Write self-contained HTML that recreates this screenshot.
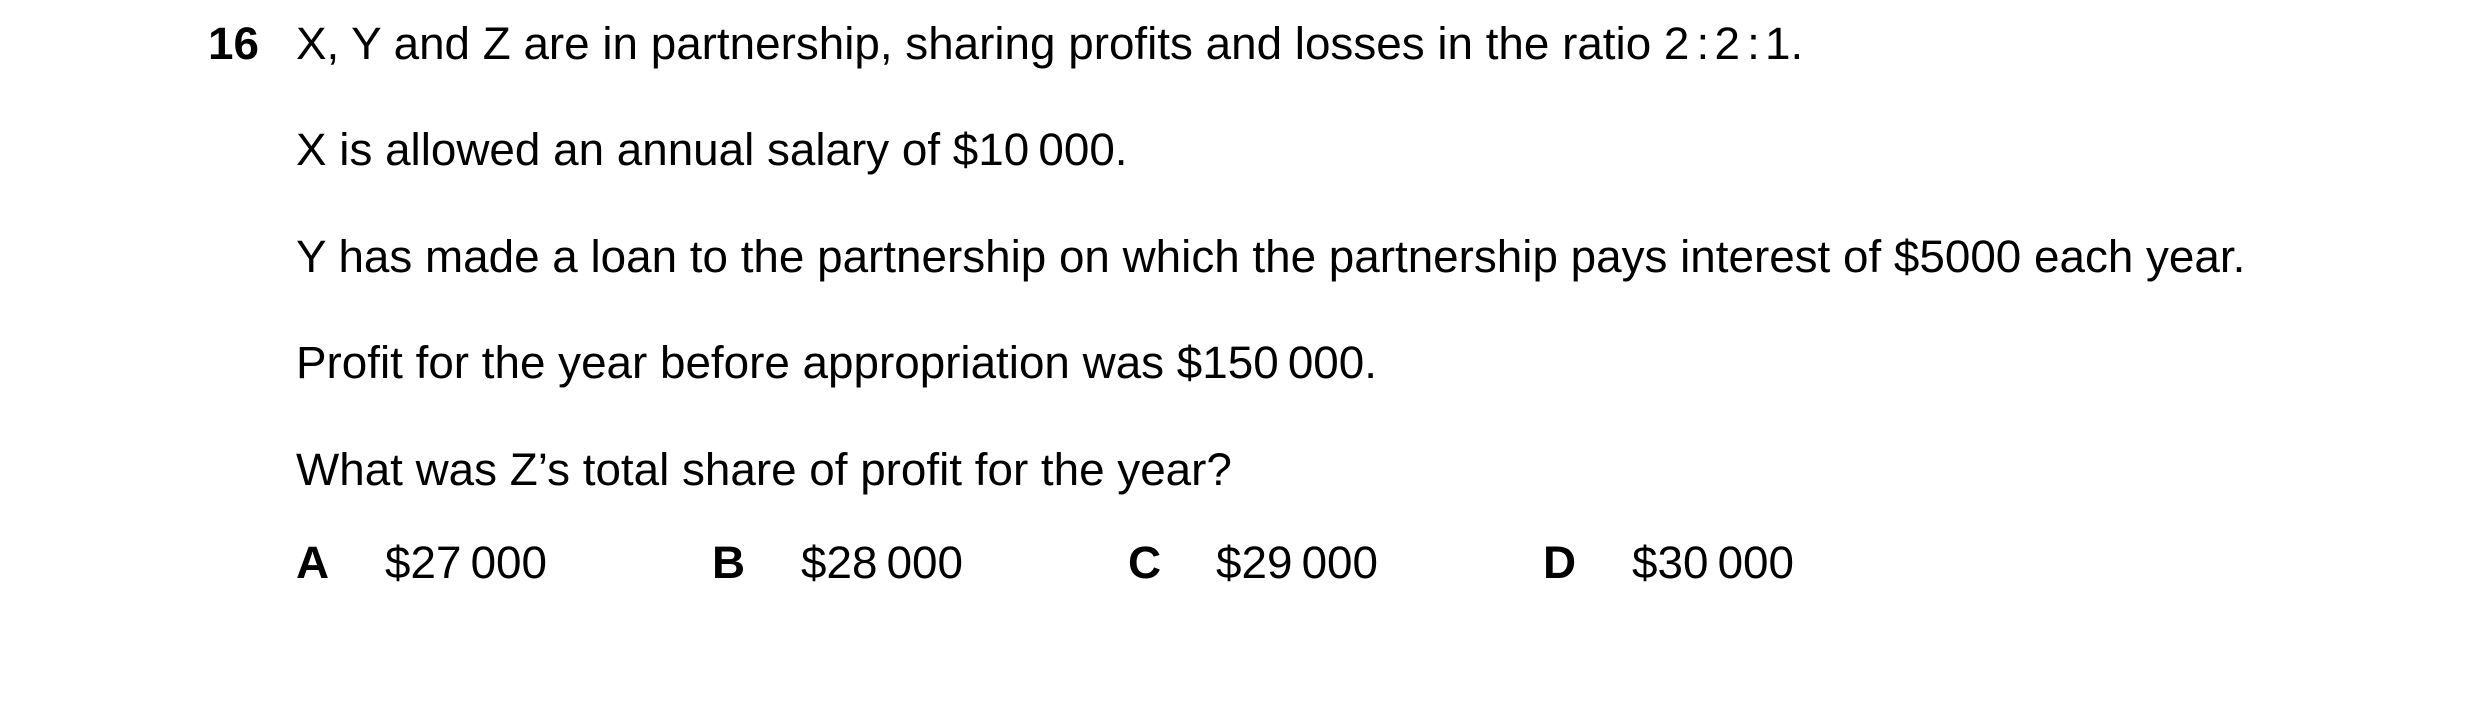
<!DOCTYPE html>
<html><head><meta charset="utf-8"><style>
html,body{margin:0;padding:0;background:#fff;}
body{width:2480px;height:716px;position:relative;overflow:hidden;font-family:"Liberation Sans",Arial,sans-serif;font-size:45.8px;color:#000;}
.t{position:absolute;white-space:nowrap;line-height:1;}
b{font-weight:bold;}
</style></head><body>
<div class="t" style="left:208px;top:21px;"><b>16</b></div>
<div class="t" style="left:296px;top:21px;">X, Y and Z are in partnership, sharing profits and losses in the ratio 2<span style="letter-spacing:-2px">&#8201;:&#8201;</span>2<span style="letter-spacing:-2px">&#8201;:&#8201;</span>1.</div>
<div class="t" style="left:296px;top:127px;">X is allowed an annual salary of $10&#8201;000.</div>
<div class="t" style="left:296px;top:234px;">Y has made a loan to the partnership on which the partnership pays interest of $5000 each year.</div>
<div class="t" style="left:296px;top:340px;">Profit for the year before appropriation was $150&#8201;000.</div>
<div class="t" style="left:296px;top:447px;">What was Z’s total share of profit for the year?</div>
<div class="t" style="left:296px;top:540px;"><b>A</b></div>
<div class="t" style="left:385px;top:540px;">$27&#8201;000</div>
<div class="t" style="left:712px;top:540px;"><b>B</b></div>
<div class="t" style="left:801px;top:540px;">$28&#8201;000</div>
<div class="t" style="left:1128px;top:540px;"><b>C</b></div>
<div class="t" style="left:1216px;top:540px;">$29&#8201;000</div>
<div class="t" style="left:1543px;top:540px;"><b>D</b></div>
<div class="t" style="left:1632px;top:540px;">$30&#8201;000</div>
</body></html>
